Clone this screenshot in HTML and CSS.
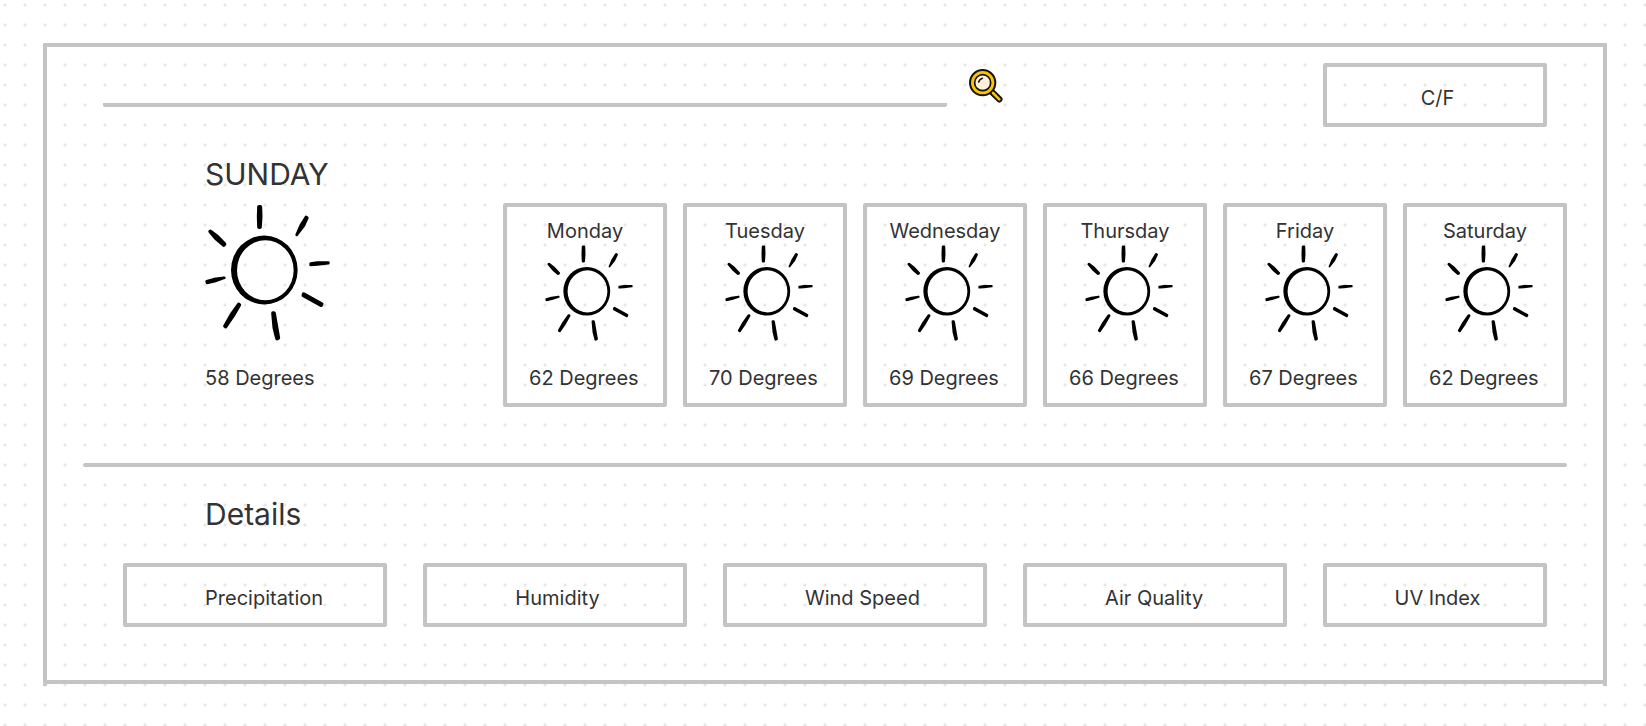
FILE: index.html
```html
<!DOCTYPE html>
<html lang="en">
<head>
<meta charset="utf-8">
<meta name="viewport" content="width=device-width, initial-scale=1">
<title>Weather wireframe</title>
<link rel="stylesheet" href="styles.css">
</head>
<body>
<svg class="sprite" aria-hidden="true">
  <symbol id="sun" viewBox="0 0 375 410">
    <path fill-rule="evenodd" d="M78 197.500a100 103.500 0 1 0 200 0a100 103.500 0 1 0-200 0ZM96 198a85 90 0 1 1 170 0a85 90 0 1 1-170 0Z"/>
    <g stroke="#000" stroke-linejoin="round">
      <path stroke-width="11" d="M162 8h4l1 30-2 31h-3l-1-31Z"/>
      <path stroke-width="8" d="M303 38l4 3-11 24-21 27 12-28Z"/>
      <path stroke-width="8" d="M317 178l20-3 33 0v2l-33 4-20 1Z"/>
      <path stroke-width="11" d="M296 270l54 30-2 3-53-29Z"/>
      <path stroke-width="11" d="M204 327h3l13 74-4 2-8-32Z"/>
      <path stroke-width="11" d="M101 301l2 1-19 33-22 32-2-1 19-34Z"/>
      <path stroke-width="8" d="M5 231l22-6 31-4-29 10-23 5Z"/>
      <path stroke-width="12" d="M16 82l21 16 21 22-2 2-21-18Z"/>
    </g>
  </symbol>
</svg>
<main class="frame">
  <header class="topbar">
    <form class="search" role="search">
      <input class="search__field" type="search" aria-label="Search location">
      <button class="search__button" type="button" aria-label="Search">
        <svg class="search__icon" viewBox="0 0 102 102" aria-hidden="true">
          <path d="M68 68l23 23" stroke="#111" stroke-width="19" stroke-linecap="round"/>
          <circle cx="41" cy="41" r="38" fill="#ffc200" stroke="#111" stroke-width="6"/>
          <path d="M72 72l19 19" stroke="#ffc200" stroke-width="8" stroke-linecap="round"/>
          <circle cx="41" cy="41" r="24" fill="#fff0d9" stroke="#111" stroke-width="5"/>
          <path d="M29 39q2-8 11-11" fill="none" stroke="#111" stroke-width="5" stroke-linecap="round"/>
        </svg>
      </button>
    </form>
    <button class="tile tile--centered" type="button">C/F</button>
  </header>

  <section class="forecast">
    <div class="today">
      <h1 class="heading">SUNDAY</h1>
      <svg class="today__sun" role="img" aria-label="Sunny"><use href="#sun"/></svg>
      <p class="label">58 Degrees</p>
    </div>
    <div class="week">
      <article class="day"><h2 class="label day__name">Monday</h2><svg class="day__sun" role="img" aria-label="Sunny"><use href="#sun"/></svg><p class="label day__temp">62 Degrees</p></article>
      <article class="day"><h2 class="label day__name">Tuesday</h2><svg class="day__sun" role="img" aria-label="Sunny"><use href="#sun"/></svg><p class="label day__temp">70 Degrees</p></article>
      <article class="day"><h2 class="label day__name">Wednesday</h2><svg class="day__sun" role="img" aria-label="Sunny"><use href="#sun"/></svg><p class="label day__temp">69 Degrees</p></article>
      <article class="day"><h2 class="label day__name">Thursday</h2><svg class="day__sun" role="img" aria-label="Sunny"><use href="#sun"/></svg><p class="label day__temp">66 Degrees</p></article>
      <article class="day"><h2 class="label day__name">Friday</h2><svg class="day__sun" role="img" aria-label="Sunny"><use href="#sun"/></svg><p class="label day__temp">67 Degrees</p></article>
      <article class="day"><h2 class="label day__name">Saturday</h2><svg class="day__sun" role="img" aria-label="Sunny"><use href="#sun"/></svg><p class="label day__temp">62 Degrees</p></article>
    </div>
  </section>

  <hr class="divider">

  <section class="details">
    <h2 class="heading details__title">Details</h2>
    <div class="details__tiles">
      <button class="tile" type="button">Precipitation</button>
      <button class="tile tile--centered" type="button">Humidity</button>
      <button class="tile" type="button">Wind Speed</button>
      <button class="tile" type="button">Air Quality</button>
      <button class="tile tile--centered" type="button">UV Index</button>
    </div>
  </section>
</main>
</body>
</html>
```

FILE: styles.css
```css
:root {
  --line: #c4c4c4;
  --text: #333;
}

* {
  box-sizing: border-box;
}

body {
  margin: 0;
  padding: 43px 39px 42px 43px;
  background: #fff radial-gradient(circle at 5px 5px, #e6e6e6 1px, transparent 2px) 0 0 / 20px 20px;
  color: var(--text);
  font-family: Inter, "Liberation Sans", sans-serif;
  font-size: 20px;
  line-height: 24px;
}

.sprite {
  position: absolute;
  width: 0;
  height: 0;
}

.frame {
  position: relative;
  padding: 16px 0 53px;
  border: 4px solid var(--line);
  border-radius: 1px;
}

/* The side strokes run slightly past the bottom edge. */
.frame::after {
  content: "";
  position: absolute;
  left: -4px;
  right: -4px;
  bottom: -6px;
  height: 2px;
  border: solid var(--line);
  border-width: 0 4px;
}

.heading {
  margin: 0;
  font-size: 30px;
  font-weight: 400;
  line-height: 36px;
}

.label {
  margin: 0;
  font-size: 20px;
  font-weight: 400;
  line-height: 24px;
}

.tile {
  height: 64px;
  padding: 5px 0 0 78px;
  border: 4px solid var(--line);
  border-radius: 2px;
  background: none;
  color: inherit;
  font: inherit;
  text-align: left;
  white-space: nowrap;
}

.tile--centered {
  padding: 5px 0 0 5px;
  text-align: center;
}

.topbar {
  display: grid;
  grid-template-columns: 900fr 224fr;
  gap: 320px;
  padding: 0 56px;
}

.search {
  display: flex;
  align-items: flex-start;
  gap: 22px;
  padding-top: 6px;
}

.search__field {
  flex: 1;
  min-width: 0;
  height: 38px;
  padding: 0 8px 4px;
  border: 0;
  border-radius: 2px;
  outline: 0;
  background: linear-gradient(var(--line), var(--line)) bottom / 100% 4px no-repeat;
  color: inherit;
  font: inherit;
  appearance: none;
}

.search__button {
  padding: 0;
  border: 0;
  background: none;
}

.search__icon {
  display: block;
  width: 34px;
  height: 34px;
}

.forecast {
  display: grid;
  grid-template-columns: 298fr 1064fr;
  align-items: end;
  padding: 29px 36px 0 158px;
}

.today {
  padding-bottom: 17px;
}

.today__sun {
  display: block;
  width: 125px;
  height: 137px;
  margin: 12px 0 25px;
}

.week {
  display: grid;
  grid-template-columns: repeat(6, 1fr);
  gap: 16px;
}

.day {
  padding: 12px 0 13px;
  border: 4px solid var(--line);
  border-radius: 2px;
}

.day__name {
  text-align: center;
}

.day__sun {
  display: block;
  width: 88px;
  height: 96px;
  margin: 2px auto 25px 38px;
}

.day__temp {
  padding-left: 22px;
  white-space: nowrap;
}

.divider {
  height: 4px;
  margin: 56px 36px 0;
  border: 0;
  border-radius: 2px;
  background: var(--line);
}

.details {
  padding: 29px 56px 0 76px;
}

.details__title {
  padding-left: 82px;
}

.details__tiles {
  display: grid;
  grid-template-columns: repeat(4, 264fr) 224fr;
  gap: 36px;
  margin-top: 31px;
}
```
